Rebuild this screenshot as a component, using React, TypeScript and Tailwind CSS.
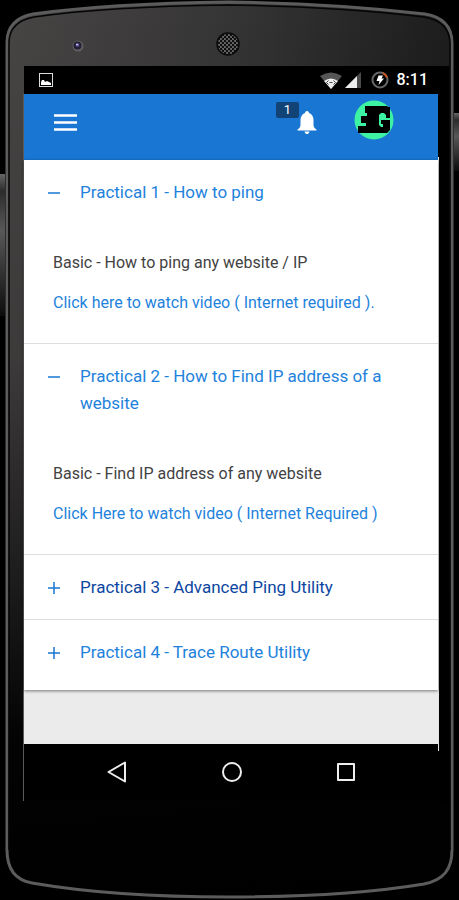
import React, { useState } from 'react';

type Practical = {
  title: string;
  text: string;
  link: string;
  open: boolean;
  visited?: boolean;
};

const practicals: Practical[] = [
  {
    title: 'Practical 1 - How to ping',
    text: 'Basic - How to ping any website / IP',
    link: 'Click here to watch video ( Internet required ).',
    open: true,
  },
  {
    title: 'Practical 2 - How to Find IP address of a website',
    text: 'Basic - Find IP address of any website',
    link: 'Click Here to watch video ( Internet Required )',
    open: true,
  },
  {
    title: 'Practical 3 - Advanced Ping Utility',
    text: 'Advanced - Ping options',
    link: 'Click Here to watch video ( Internet Required )',
    open: false,
    visited: true,
  },
  {
    title: 'Practical 4 - Trace Route Utility',
    text: 'Basic - Trace the route to any website',
    link: 'Click Here to watch video ( Internet Required )',
    open: false,
  },
];

const bodyPath =
  'M7 42 C7 27 16 17 33 14 C90 6 155 3 229 2 C303 3 365 7 425 14 C443 17 452 27 452 43 V850 C452 869 444 880 424 884 C370 893 300 897 229 897 C160 897 90 893 32 883 C15 880 7 869 7 850 Z';

// Phone body behind the screen
const PhoneFrame = () => (
  <svg className="absolute inset-0 h-full w-full" viewBox="0 0 459 900" preserveAspectRatio="none" aria-hidden="true">
    <defs>
      <linearGradient id="face" x1="0" y1="0" x2="459" y2="0" gradientUnits="userSpaceOnUse">
        <stop offset="0" stopColor="#484545" />
        <stop offset="0.5" stopColor="#363535" />
        <stop offset="1" stopColor="#1c1c1c" />
      </linearGradient>
      <linearGradient id="shade" x1="0" y1="0" x2="0" y2="1">
        <stop offset="0" stopColor="#000" stopOpacity="0" />
        <stop offset="0.4" stopColor="#000" stopOpacity="0.15" />
        <stop offset="0.65" stopColor="#000" stopOpacity="0.6" />
        <stop offset="0.82" stopColor="#000" stopOpacity="0.95" />
        <stop offset="1" stopColor="#000" />
      </linearGradient>
      <linearGradient id="key" x1="0" y1="0" x2="0" y2="1">
        <stop offset="0" stopColor="#666" />
        <stop offset="0.12" stopColor="#2c2c2c" />
        <stop offset="0.4" stopColor="#585858" />
        <stop offset="1" stopColor="#0c0c0c" />
      </linearGradient>
      <pattern id="mesh" width="4" height="4" patternUnits="userSpaceOnUse">
        <rect width="4" height="4" fill="#6a6a6a" />
        <circle cx="1" cy="1" r="1.3" fill="#111" />
        <circle cx="3" cy="3" r="1.3" fill="#111" />
      </pattern>
    </defs>
    <rect width="459" height="900" fill="#000" />
    <rect x="0" y="174" width="5" height="142" fill="url(#key)" />
    <rect x="454" y="113" width="5" height="58" fill="url(#key)" />
    <path d={bodyPath} fill="url(#face)" />
    <path d={bodyPath} fill="url(#shade)" stroke="#5c5c5c" strokeWidth="3" />
    <path
      d="M9 850 V43 C9 29 18 20 34 17 C90 9 155 6 229 5 C303 6 365 10 424 17 C441 20 450 29 450 44 V850"
      fill="none"
      stroke="#050505"
      strokeWidth="1.5"
    />
    <rect x="438" y="66" width="11" height="740" fill="#000" />
    <path d="M23.5 94 V801" stroke="#5a5a5a" />
    <path d="M438.5 157 V751" stroke="#e4e4e4" />
    <circle cx="78" cy="46" r="5.5" fill="#605f60" />
    <circle cx="77.5" cy="45.5" r="4" fill="#242134" />
    <circle cx="77.5" cy="45" r="1.8" fill="#655caa" />
    <circle cx="77" cy="44.5" r="0.8" fill="#eee" />
    <circle cx="228" cy="44" r="11" fill="url(#mesh)" stroke="#0a0a0a" strokeWidth="1.5" />
  </svg>
);

const StatusBar = () => (
  <div className="flex h-7 items-center bg-black pl-[15px] pr-[10px] text-white">
    <svg className="h-[14px] w-[14px]" viewBox="0 0 14 14" aria-hidden="true">
      <rect x="0.5" y="0.5" width="13" height="13" fill="none" stroke="#ddd" />
      <path d="M2 12 V9 L3 7 H5 L6 9 L8 8 L10 9 L12 10 V12 Z" fill="#fff" />
    </svg>
    <svg className="ml-auto h-[17px] w-[22px]" viewBox="0 0 22 17" aria-hidden="true">
      <path d="M0 4 Q11 -3 22 4 L11 17 Z" fill="#555" />
      <path d="M4 9 Q11 4 18 9 L11 17 Z" fill="#eee" />
      <path d="M8.5 8.5 L6.5 10.5 L8.5 12.5 M13.5 8.5 L15.5 10.5 L13.5 12.5 M9.5 10.5 H12.5" fill="none" stroke="#444" />
    </svg>
    <svg className="ml-[3px] h-4 w-4" viewBox="0 0 16 16" aria-hidden="true">
      <path d="M16 0 V16 H0 Z" fill="#4a4a4a" />
      <path d="M12 4 V16 H0 Z" fill="#eee" />
    </svg>
    <svg className="ml-[10px] h-[18px] w-[18px]" viewBox="0 0 18 18" aria-hidden="true">
      <circle cx="9" cy="9" r="7.5" fill="none" stroke="#666" strokeWidth="2" />
      <path d="M12 2.2 A7.5 7.5 0 0 1 16 6.5" fill="none" stroke="#cf5120" strokeWidth="2" />
      <path d="M7.5 4.5 H12 L10.5 7.5 H13 L7.5 14 L8.5 10 H5.5 Z" fill="#fff" />
    </svg>
    <span className="ml-2 text-base font-medium leading-7">8:11</span>
  </div>
);

const AppBar = () => (
  <header className="flex h-[66px] items-start bg-[#1976d2] pl-[30px] pr-11 text-white">
    <button type="button" aria-label="Open menu" className="mt-5">
      <svg className="h-[17px] w-[23px]" viewBox="0 0 23 17" fill="currentColor" aria-hidden="true">
        <path d="M0 0.3 H23 V2.7 H0 Z M0 7.3 H23 V9.7 H0 Z M0 14.3 H23 V16.7 H0 Z" />
      </svg>
    </button>
    <button type="button" aria-label="Notifications" className="relative ml-auto mt-4">
      <svg className="h-6 w-5" viewBox="0 0 20 24" fill="currentColor" aria-hidden="true">
        <path d="M10 1 C11.5 1 12 2 12 3 C15 4 16.5 7 16.5 10 V15 C16.5 17 18 18.5 19.5 19.5 V20.5 H0.5 V19.5 C2 18.5 3.5 17 3.5 15 V10 C3.5 7 5 4 8 3 C8 2 8.5 1 10 1 Z M7.5 21.5 H12.5 C12 23.5 11 24 10 24 C9 24 8 23.5 7.5 21.5 Z" />
      </svg>
      <span className="absolute -left-[21px] -top-2 h-4 w-[23px] rounded-xs bg-[#114376] text-center text-[13px] leading-[15px]">1</span>
    </button>
    <button type="button" aria-label="Account" className="ml-[37px] mt-[6px]">
      <svg className="h-10 w-10" viewBox="0 0 40 40" aria-hidden="true">
        <circle cx="20" cy="20" r="19.5" fill="#3df2a2" />
        <path
          d="M11 6 H33 L34 7 H36 V18 H32 V15 L30 13 H27 L25 15 V25 L27 27 H29 V24 H27 V20 H36 V30 L33 33 H4 V26 H12 V23 H7 V16 H13 V13 H11 Z"
          fill="#000"
        />
      </svg>
    </button>
  </header>
);

const PracticalItem: React.FC<{ item: Practical }> = ({ item }) => {
  const [open, setOpen] = useState(item.open);

  return (
    <li className="border-b border-[#dddddd] last:border-b-0">
      <button
        type="button"
        aria-expanded={open}
        onClick={() => setOpen(!open)}
        className={`flex w-full items-start gap-5 pb-[18px] pl-6 pr-8 pt-[19px] text-left text-[17px] leading-[27px] ${
          item.visited ? 'text-[#0d47a1]' : 'text-[#1e82dc]'
        }`}
      >
        <svg className="mt-2 h-3 w-3 shrink-0 text-[#1976d2]" viewBox="0 0 12 12" stroke="currentColor" strokeWidth="1.5" aria-hidden="true">
          <path d={open ? 'M0 6 H12' : 'M0 6 H12 M6 0 V12'} />
        </svg>
        <span>{item.title}</span>
      </button>
      {open && (
        <div className="px-[29px] pb-7 pt-[27px] text-base leading-6">
          <p className="text-[#424242]">{item.text}</p>
          <a href="#video" className="mt-4 block text-[#1e82dc]">
            {item.link}
          </a>
        </div>
      )}
    </li>
  );
};

const NavBar = () => (
  <nav className="flex h-14 items-center justify-between bg-black pl-[82px] pr-[81px] text-[#eeeeee]">
    <button type="button" aria-label="Back">
      <svg className="h-[22px] w-[22px]" viewBox="0 0 22 22" fill="none" stroke="currentColor" strokeWidth="2" strokeLinejoin="round" aria-hidden="true">
        <path d="M19 1.5 V20.5 L2.5 11 Z" />
      </svg>
    </button>
    <button type="button" aria-label="Home">
      <svg className="h-[22px] w-[22px]" viewBox="0 0 22 22" fill="none" stroke="currentColor" strokeWidth="2" aria-hidden="true">
        <circle cx="11" cy="11" r="9" />
      </svg>
    </button>
    <button type="button" aria-label="Recent apps">
      <svg className="h-[22px] w-[22px]" viewBox="0 0 22 22" fill="none" stroke="currentColor" strokeWidth="2" strokeLinejoin="round" aria-hidden="true">
        <rect x="3" y="3" width="16" height="16" />
      </svg>
    </button>
  </nav>
);

export default function App() {
  return (
    <div className="relative min-h-screen overflow-hidden bg-black font-['Roboto','Noto_Sans',sans-serif]">
      <PhoneFrame />
      <div className="relative pb-[100px] pl-6 pr-[21px] pt-[66px]">
        <StatusBar />
        <AppBar />
        <main className="bg-[#ebebeb] pb-[54px]">
          <ul className="bg-white pb-1.5 shadow-[0_1px_3px_rgba(0,0,0,0.5)]">
            {practicals.map((item) => (
              <PracticalItem key={item.title} item={item} />
            ))}
          </ul>
        </main>
        <NavBar />
      </div>
    </div>
  );
}
